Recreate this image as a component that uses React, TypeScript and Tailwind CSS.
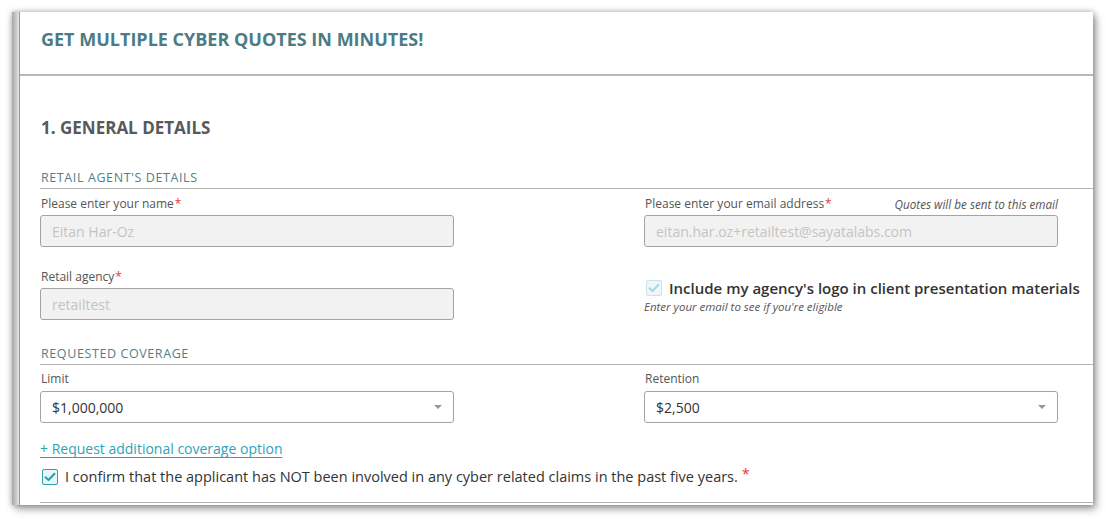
import React from "react";

const Req = () => <span className="text-[#e53935] ml-[1px]">*</span>;

const Label = ({ children, req }: { children: React.ReactNode; req?: boolean }) => (
  <div className="text-[12px] leading-[16px] text-[#555]">
    {children}
    {req && <Req />}
  </div>
);

const DisabledInput = ({ value }: { value: string }) => (
  <div className="h-[32px] w-full rounded-[3px] border border-[#a3a3a3] bg-[#f2f2f2] pl-[11px] flex items-center text-[14px] text-[#c4c4c4]">
    {value}
  </div>
);

const Select = ({ value }: { value: string }) => (
  <div className="h-[32px] w-full rounded-[3px] border border-[#a3a3a3] bg-white pl-[11px] pr-[11px] flex items-center justify-between text-[14px] text-[#333]">
    <span>{value}</span>
    <span className="w-0 h-0 border-l-[4px] border-r-[4px] border-t-[4px] border-l-transparent border-r-transparent border-t-[#999]" />
  </div>
);

const Check = ({ color }: { color: string }) => (
  <svg width="12" height="10" viewBox="0 0 12 10" fill="none">
    <path d="M1.5 5.2 L4.5 8 L10.5 1.8" stroke={color} strokeWidth="2" strokeLinecap="round" strokeLinejoin="round" />
  </svg>
);

const SectionHead = ({ children }: { children: React.ReactNode }) => (
  <div className="border-b border-[#b5b5b5] pb-[2px] pl-[1px] text-[12.5px] leading-[16px] tracking-[0.6px] text-[#4f7f8b]">
    {children}
  </div>
);

export default function App() {
  return (
    <div className="w-[1106px] h-[519px] bg-white pt-[12px] pl-[12px] overflow-hidden" style={{ fontFamily: "'Open Sans', 'Liberation Sans', sans-serif" }}>
      <div className="w-[1081px] h-[493px] bg-white flex overflow-hidden shadow-[0_0_6px_rgba(0,0,0,0.3),3px_4px_8px_rgba(0,0,0,0.35)]">
        <div className="w-[7px] shrink-0 bg-gradient-to-r from-[#a8a8a8] via-[#c4c4c4] to-[#e6e6e6]" />
        <div className="flex-1 border-l border-[#9a9a9a] flex flex-col">
          <div className="h-[64px] border-b-2 border-[#b8b8b8] pt-[15px] pl-[21px] shrink-0">
            <div className="text-[18px] leading-[24px] font-bold text-[#4b7c86]">GET MULTIPLE CYBER QUOTES IN MINUTES!</div>
          </div>
          <div className="pl-[20px] flex flex-col">
            <div className="mt-[41px] pl-[1px] text-[17px] leading-[22px] font-bold text-[#58595b]">1. GENERAL DETAILS</div>
            <div className="mt-[31px]">
              <SectionHead>RETAIL AGENT'S DETAILS</SectionHead>
            </div>
            <div className="grid grid-cols-[414px_414px] gap-x-[190px] gap-y-[22px] mt-[7px]">
              <div className="flex flex-col gap-[3px]">
                <div className="pl-[1px]"><Label req>Please enter your name</Label></div>
                <DisabledInput value="Eitan Har-Oz" />
              </div>
              <div className="flex flex-col gap-[3px]">
                <div className="flex justify-between items-center h-[16px] pl-[1px]">
                  <Label req>Please enter your email address</Label>
                  <span className="text-[11.7px] leading-[16px] italic text-[#555]">Quotes will be sent to this email</span>
                </div>
                <DisabledInput value="eitan.har.oz+retailtest@sayatalabs.com" />
              </div>
              <div className="flex flex-col gap-[3px]">
                <div className="pl-[1px]"><Label req>Retail agency</Label></div>
                <DisabledInput value="retailtest" />
              </div>
              <div className="pt-[9px] flex flex-col">
                <div className="flex items-center h-[20px] pl-[2px] gap-[7px] whitespace-nowrap">
                  <span className="w-[16px] h-[16px] rounded-[2px] border border-[#c6e4e9] bg-[#eef8f9] flex items-center justify-center shrink-0">
                    <Check color="#a9d7de" />
                  </span>
                  <span className="text-[15px] font-semibold text-[#333] leading-[20px]">Include my agency's logo in client presentation materials</span>
                </div>
                <div className="text-[11.5px] italic text-[#555] leading-[15px] mt-[1px]">Enter your email to see if you're eligible</div>
              </div>
            </div>
            <div className="mt-[26px]">
              <SectionHead>REQUESTED COVERAGE</SectionHead>
            </div>
            <div className="grid grid-cols-[414px_414px] gap-x-[190px] mt-[6px]">
              <div className="flex flex-col gap-[4px]">
                <div className="pl-[1px]"><Label>Limit</Label></div>
                <Select value="$1,000,000" />
              </div>
              <div className="flex flex-col gap-[4px]">
                <div className="pl-[1px]"><Label>Retention</Label></div>
                <Select value="$2,500" />
              </div>
            </div>
            <div className="mt-[16px] text-[14px] leading-[20px]">
              <span className="text-[#2fa3b6] underline underline-offset-[3px] decoration-1">+ Request additional coverage option</span>
            </div>
            <div className="mt-[8px] flex items-center h-[20px] pl-[2px] gap-[7px] whitespace-nowrap">
              <span className="w-[16px] h-[16px] rounded-[2px] border-[1.5px] border-[#2ba0b1] bg-[#e9f6f8] flex items-center justify-center shrink-0">
                <Check color="#2a9db0" />
              </span>
              <span className="text-[14.5px] font-medium text-[#333] leading-[20px]">
                I confirm that the applicant has NOT been involved in any cyber related claims in the past five years.
                <span className="text-[#e53935] ml-[4px] relative -top-[3px]">*</span>
              </span>
            </div>
            <div className="mt-[15px] border-b border-[#b5b5b5]" />
          </div>
        </div>
      </div>
    </div>
  );
}
